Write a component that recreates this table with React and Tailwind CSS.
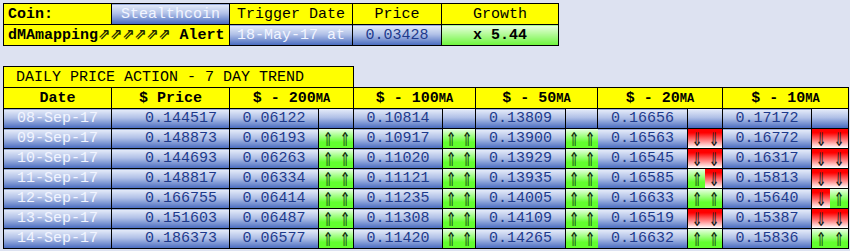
import React from 'react';

const blue = 'bg-[linear-gradient(to_bottom,#e6ecf9,#b0c0e7_45%,#4669be)]';
const yellow = 'bg-[#ffff00]';
const up = 'bg-[linear-gradient(to_bottom,#eaffe4,#62ff2e_70%)]';
const down = 'bg-[linear-gradient(to_bottom,#ff0000_20%,#ffffff)]';

const rows = [
  ['08-Sep-17', '0.144517', ['0.06122', ''], ['0.10814', ''], ['0.13809', ''], ['0.16656', ''], ['0.17172', '']],
  ['09-Sep-17', '0.148873', ['0.06193', 'uu'], ['0.10917', 'uu'], ['0.13900', 'uu'], ['0.16563', 'dd'], ['0.16772', 'dd']],
  ['10-Sep-17', '0.144693', ['0.06263', 'uu'], ['0.11020', 'uu'], ['0.13929', 'uu'], ['0.16545', 'dd'], ['0.16317', 'dd']],
  ['11-Sep-17', '0.148817', ['0.06334', 'uu'], ['0.11121', 'uu'], ['0.13935', 'uu'], ['0.16585', 'ud'], ['0.15813', 'dd']],
  ['12-Sep-17', '0.166755', ['0.06414', 'uu'], ['0.11235', 'uu'], ['0.14005', 'uu'], ['0.16633', 'uu'], ['0.15640', 'du']],
  ['13-Sep-17', '0.151603', ['0.06487', 'uu'], ['0.11308', 'uu'], ['0.14109', 'uu'], ['0.16519', 'dd'], ['0.15387', 'dd']],
  ['14-Sep-17', '0.186373', ['0.06577', 'uu'], ['0.11420', 'uu'], ['0.14265', 'uu'], ['0.16632', 'uu'], ['0.15836', 'uu']],
];

// value col + arrow col widths for the 5 MA groups
const groups = [
  { label: '200', w: 89, a: 35 },
  { label: '100', w: 89, a: 33 },
  { label: '50', w: 90, a: 32 },
  { label: '20', w: 90, a: 35 },
  { label: '10', w: 89, a: 37 },
];

const cell = 'border border-black p-0';

const Arrows = ({ code }) => {
  if (!code) return <div className={`h-full ${blue}`} />;
  return (
    <div className="flex h-full">
      {code.split('').map((c, i) => (
        <div
          key={i}
          className={`flex-1 flex items-center justify-center ${c === 'u' ? up + ' text-[#123010]' : down + ' text-[#222]'}`}
        >
          <span className="inline-block scale-x-[0.7] text-[19px] leading-[14px] font-['DejaVu_Sans',sans-serif]">
            {c === 'u' ? '⇑' : '⇓'}
          </span>
        </div>
      ))}
    </div>
  );
};

export default function App() {
  return (
    <div className="min-h-[251px] bg-[#dde2f1] p-[3px] font-['Liberation_Mono','Courier_New',monospace] text-[15px] leading-none">
      <table className="border-collapse table-fixed w-[555px]">
        <colgroup>
          <col className="w-[108px]" />
          <col className="w-[118px]" />
          <col className="w-[123px]" />
          <col className="w-[89px]" />
          <col className="w-[117px]" />
        </colgroup>
        <tbody>
          <tr className="h-[21px]">
            <td className={`${cell} ${yellow} font-bold pl-[4px] text-left`}>Coin:</td>
            <td className={`${cell} ${blue} text-center text-[#f2f5ff]`}>Stealthcoin</td>
            <td className={`${cell} ${yellow} text-center`}>Trigger Date</td>
            <td className={`${cell} ${yellow} text-center`}>Price</td>
            <td className={`${cell} ${yellow} text-center`}>Growth</td>
          </tr>
          <tr className="h-[21px]">
            <td colSpan={2} className={`${cell} ${yellow} font-bold pl-[4px] text-left whitespace-nowrap`}>
              dMAmapping<span className="font-['DejaVu_Sans',sans-serif] text-[15px] text-[#1e2a00] tracking-[-0.5px]">⇗⇗⇗⇗⇗⇗</span> Alert
            </td>
            <td className={`${cell} ${blue} text-center text-[#f2f5ff]`}>18-May-17 at</td>
            <td className={`${cell} ${blue} text-center text-[#1e3a8c]`}>0.03428</td>
            <td className={`${cell} bg-[linear-gradient(to_bottom,#eaffe0,#6cf53a)] text-center font-bold text-black`}>x 5.44</td>
          </tr>
        </tbody>
      </table>

      <table className="border-collapse table-fixed w-[846px] mt-[20px]">
        <colgroup>
          <col className="w-[108px]" />
          <col className="w-[118px]" />
          {groups.map((g) => (
            <React.Fragment key={g.label}>
              <col style={{ width: g.w }} />
              <col style={{ width: g.a }} />
            </React.Fragment>
          ))}
        </colgroup>
        <tbody>
          <tr className="h-[21px]">
            <td colSpan={4} className={`${cell} ${yellow} pl-[12px] text-left whitespace-nowrap`}>
              DAILY PRICE ACTION - 7 DAY TREND
            </td>
          </tr>
          <tr className="h-[21px]">
            <td className={`${cell} ${yellow} font-bold text-center`}>Date</td>
            <td className={`${cell} ${yellow} font-bold text-center`}>$ Price</td>
            {groups.map((g) => (
              <td key={g.label} colSpan={2} className={`${cell} ${yellow} font-bold text-center whitespace-nowrap`}>
                $ - {g.label}<span className="text-[12px]">MA</span>
              </td>
            ))}
          </tr>
          {rows.map((r) => (
            <tr key={r[0]} className="h-[20px]">
              <td className={`${cell} ${blue} text-center text-[#f2f5ff]`}>{r[0]}</td>
              <td className={`${cell} ${blue} text-right pr-[12px] text-[#1e3a8c]`}>{r[1]}</td>
              {r.slice(2).map(([v, a], i) => (
                <React.Fragment key={i}>
                  <td className={`${cell} ${blue} text-center text-[#1e3a8c]`}>{v}</td>
                  <td className={`${cell} h-[19px]`}>
                    <Arrows code={a} />
                  </td>
                </React.Fragment>
              ))}
            </tr>
          ))}
        </tbody>
      </table>
    </div>
  );
}
